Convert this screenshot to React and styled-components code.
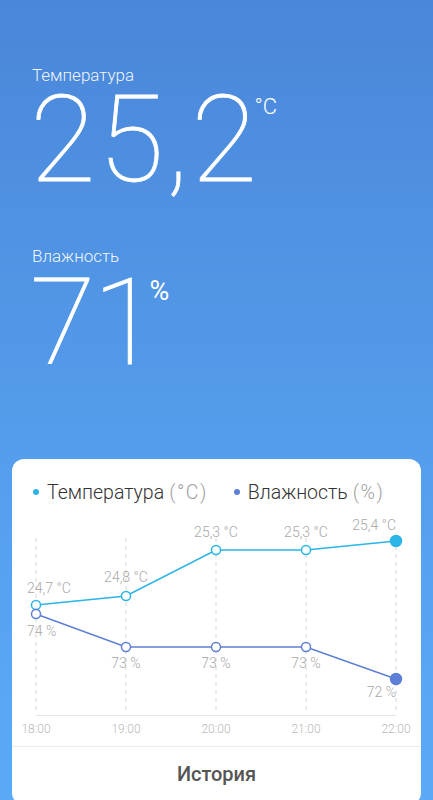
import React from "react";
import styled, { createGlobalStyle } from "styled-components";

const Global = createGlobalStyle`
  html, body { margin: 0; padding: 0; }
  body { font-family: Roboto, "Noto Sans", sans-serif; }
`;

const Screen = styled.div`
  width: 433px;
  height: 800px;
  overflow: hidden;
  background: linear-gradient(180deg, #4a86d9 0%, #559dec 55%, #5aaaf8 100%);
  display: flex;
  flex-direction: column;
`;

const Top = styled.div`
  height: 459px;
  flex-shrink: 0;
  box-sizing: border-box;
  padding: 67px 0 0 32px;
  color: #fff;
`;

const Label = styled.div`
  font-size: 17px;
  line-height: 17px;
  font-weight: 300;
  margin-top: ${(p) => p.$mt || 0}px;
  color: rgba(255, 255, 255, 0.95);
`;

const ValueRow = styled.div`
  display: flex;
  align-items: flex-start;
  margin-top: ${(p) => p.$mt}px;
  margin-left: -2px;
`;

const BigNum = styled.span`
  font-size: 120px;
  line-height: 100px;
  font-weight: 100;
  letter-spacing: ${(p) => p.$ls}px;
  -webkit-text-stroke: 0.8px #fff;
`;

const Unit = styled.span`
  font-size: ${(p) => p.$size}px;
  line-height: 1;
  font-weight: ${(p) => p.$weight || 300};
  margin-top: ${(p) => p.$mt}px;
  margin-left: ${(p) => p.$ml}px;
`;

const Card = styled.div`
  flex-shrink: 0;
  height: 346px;
  margin: 0 12px;
  background: #fff;
  border-radius: 12px;
  display: flex;
  flex-direction: column;
`;

const Legend = styled.div`
  display: flex;
  align-items: center;
  padding: 21px 0 6px 21px;
  height: 24px;
  gap: 26px;
`;

const LegendItem = styled.div`
  display: flex;
  align-items: center;
  gap: 8px;
  font-size: 19.5px;
  font-weight: 300;
  color: #333;
  white-space: nowrap;
`;

const Dot = styled.span`
  width: 6px;
  height: 6px;
  border-radius: 50%;
  background: ${(p) => p.$color};
`;

const UnitHint = styled.span`
  color: #a0a0a0;
  margin-left: 5px;
  letter-spacing: 1.5px;
`;

const ChartSvg = styled.svg`
  display: block;
  width: 409px;
  height: 236px;
  font-family: Roboto, sans-serif;
`;

const HistoryButton = styled.div`
  border-top: 1px solid #ececec;
  height: 53px;
  display: flex;
  align-items: center;
  justify-content: center;
  font-size: 20px;
  font-weight: 500;
  color: #555;
`;

const TEMP = "#2bb4e6";
const HUM = "#5d80d6";
const xs = [36, 126, 216, 306, 396];
const times = ["18:00", "19:00", "20:00", "21:00", "22:00"];
const temp = [
  { y: 605, t: "24,7 °C", ly: 593 },
  { y: 596, t: "24,8 °C", ly: 582 },
  { y: 550, t: "25,3 °C", ly: 537 },
  { y: 550, t: "25,3 °C", ly: 537 },
  { y: 541, t: "25,4 °C", ly: 530 },
];
const hum = [
  { y: 614, t: "74 %", ly: 636 },
  { y: 647, t: "73 %", ly: 668 },
  { y: 647, t: "73 %", ly: 668 },
  { y: 647, t: "73 %", ly: 668 },
  { y: 679, t: "72 %", ly: 697 },
];

function labelProps(i) {
  if (i === 0) return { x: xs[0] - 9, textAnchor: "start" };
  if (i === xs.length - 1) return { x: xs[i], textAnchor: "end" };
  return { x: xs[i], textAnchor: "middle" };
}

function Chart() {
  const tPts = temp.map((p, i) => `${xs[i]},${p.y}`).join(" ");
  const hPts = hum.map((p, i) => `${xs[i]},${p.y}`).join(" ");
  return (
    <ChartSvg viewBox="12 510 409 236">
      {xs.map((x) => (
        <line key={x} x1={x} x2={x} y1={538} y2={714} stroke="#d4d4d4" strokeWidth="1" strokeDasharray="4 4" />
      ))}
      <line x1={36} x2={396} y1={715.5} y2={715.5} stroke="#e6e6e6" strokeWidth="1" />
      {times.map((t, i) => (
        <text key={t} x={xs[i]} y={733} fontSize="12" fill="#b8b8b8" textAnchor="middle" fontWeight="300">{t}</text>
      ))}
      <polyline points={tPts} fill="none" stroke={TEMP} strokeWidth="1.6" />
      <polyline points={hPts} fill="none" stroke={HUM} strokeWidth="1.6" />
      {temp.map((p, i) => (
        <circle key={"tc" + i} cx={xs[i]} cy={p.y} r={i === 4 ? 5.5 : 4.5} fill={i === 4 ? TEMP : "#fff"} stroke={TEMP} strokeWidth="1.5" />
      ))}
      {hum.map((p, i) => (
        <circle key={"hc" + i} cx={xs[i]} cy={p.y} r={i === 4 ? 5.5 : 4.5} fill={i === 4 ? HUM : "#fff"} stroke={HUM} strokeWidth="1.5" />
      ))}
      {temp.map((p, i) => (
        <text key={"tl" + i} {...labelProps(i)} y={p.ly} fontSize="14" fill="#a8a8a8" fontWeight="300">{p.t}</text>
      ))}
      {hum.map((p, i) => (
        <text key={"hl" + i} {...labelProps(i)} y={p.ly} fontSize="14" fill="#a8a8a8" fontWeight="300">{p.t}</text>
      ))}
    </ChartSvg>
  );
}

export default function App() {
  return (
    <>
      <Global />
      <Screen>
        <Top>
          <Label>Температура</Label>
          <ValueRow $mt={6}>
            <BigNum $ls={2.5}>25,2</BigNum>
            <Unit $size={22} $mt={6} $ml={-5}>°C</Unit>
          </ValueRow>
          <Label $mt={58}>Влажность</Label>
          <ValueRow $mt={8}>
            <BigNum $ls={-3}>71</BigNum>
            <Unit $size={27} $weight={400} $mt={5} $ml={-6}>%</Unit>
          </ValueRow>
        </Top>
        <Card>
          <Legend>
            <LegendItem>
              <Dot $color={TEMP} />
              <span>Температура<UnitHint>(°C)</UnitHint></span>
            </LegendItem>
            <LegendItem>
              <Dot $color={HUM} />
              <span>Влажность<UnitHint>(%)</UnitHint></span>
            </LegendItem>
          </Legend>
          <Chart />
          <HistoryButton>История</HistoryButton>
        </Card>
      </Screen>
    </>
  );
}
